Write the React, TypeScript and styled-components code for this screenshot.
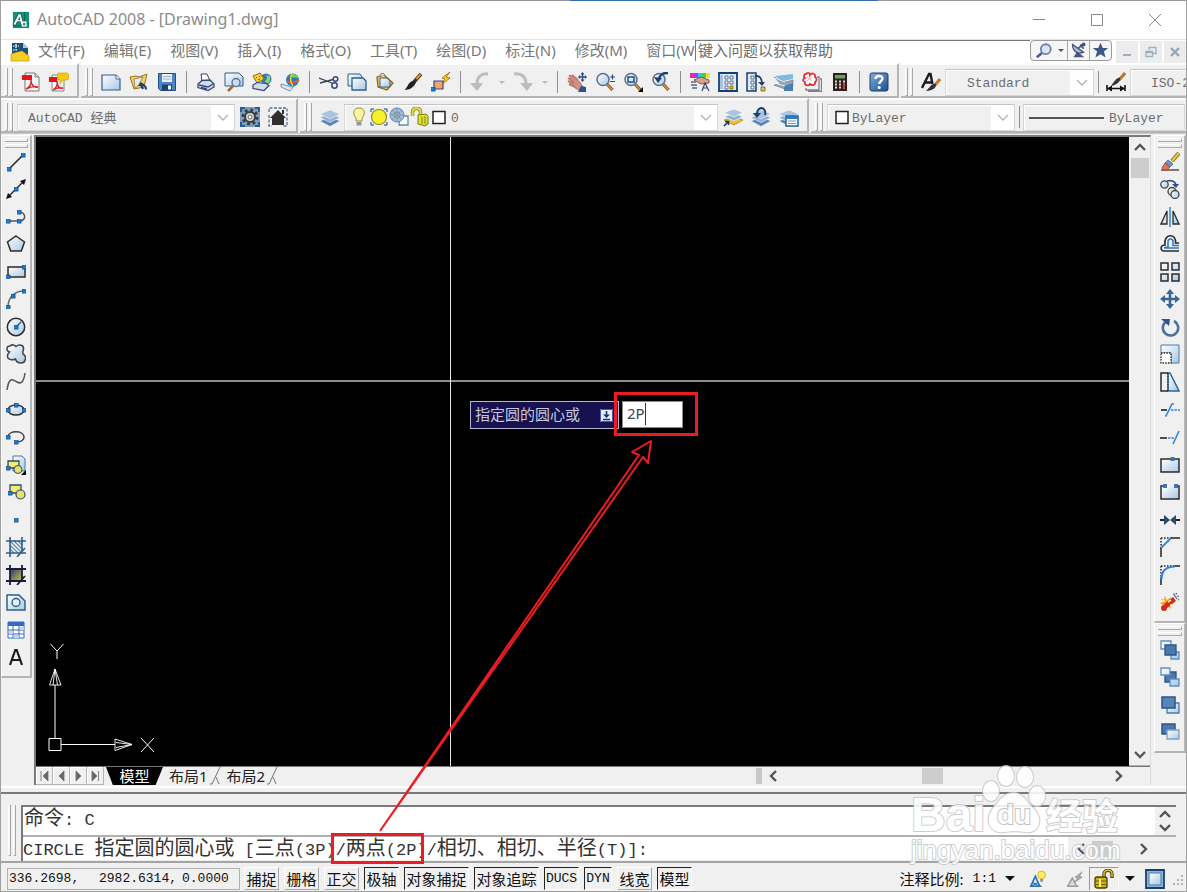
import React from "react";
import styled, { createGlobalStyle, css } from "styled-components";

const SANS = `"Noto Sans", "Noto Sans CJK SC", sans-serif`;
const MONO = `"Liberation Mono", "Noto Sans CJK SC", monospace`;

const GlobalStyle = createGlobalStyle`
  *, *::before, *::after { box-sizing: border-box; }
  body { margin: 0; background: #f0f0f0; }
  button, input, select { font: inherit; color: inherit; margin: 0; padding: 0; border: 0; background: none; border-radius: 0; }
`;

const Window = styled.div`
  position: relative;
  display: flex;
  flex-direction: column;
  min-height: 100vh;
  overflow: hidden;
  background: #f0f0f0;
  border-left: 1px solid #a0a0a0;
  border-right: 1px solid #a0a0a0;
  font-family: ${SANS};
`;

const TopEdge = styled.div`
  height: 1px;
  background: linear-gradient(to right, #9a9696 48%, #2f6fae 48%, #2f6fae 74%, #9a9a9a 74%);
`;

/* ---------- title bar ---------- */
const TitleBar = styled.header`
  display: flex;
  align-items: center;
  height: 38px;
  padding: 0 2px 0 11px;
  background: #fff;
  color: #8c8c8c;
`;
const Title = styled.h1`
  flex: 1;
  margin: 0 0 0 7px;
  font-size: 16px;
  font-weight: 400;
  line-height: 36px;
  white-space: nowrap;
  align-self: flex-start;
`;
const CaptionButton = styled.button`
  display: flex;
  align-items: center;
  justify-content: center;
  width: 58px;
  height: 38px;
`;

/* ---------- menu bar ---------- */
const MenuBar = styled.nav`
  display: flex;
  align-items: center;
  height: 24px;
  border-top: 1px solid #e2e2e2;
  background: #fff;
  padding-left: 9px;
`;
const Menus = styled.div`
  display: flex;
  align-items: center;
  align-self: flex-start;
  gap: 19px;
  width: 665px;
  padding-left: 8px;
  overflow: hidden;
`;
const MenuButton = styled.button`
  flex: none;
  color: #777;
  font-size: 15px;
  line-height: 20px;
  white-space: nowrap;
`;
const HelpInput = styled.input`
  flex: 1;
  min-width: 0;
  align-self: flex-start;
  height: 21px;
  border-top: 1px solid #777;
  border-left: 1px solid #777;
  padding: 0 0 3px 2px;
  color: #6d6d6d;
  font-size: 15px;
  &::placeholder { color: #6d6d6d; opacity: 1; }
`;
const InfoButtons = styled.div`
  display: flex;
  align-self: flex-start;
  height: 21px;
  border: 1px solid #9a9a9a;
  border-radius: 4px;
  overflow: hidden;
  background: #f6f6f6;
`;
const InfoButton = styled.button<{ $w: number }>`
  display: flex;
  align-items: center;
  justify-content: center;
  gap: 5px;
  width: ${(p) => p.$w}px;
  & + & { border-left: 1px solid #a8a8a8; }
`;
const ChildButtons = styled.div`
  display: flex;
  gap: 2px;
  margin-left: 4px;
`;
const ChildButton = styled.button`
  display: flex;
  align-items: center;
  justify-content: center;
  width: 22px;
  height: 22px;
  background: #ececec;
`;

/* ---------- toolbars ---------- */
const ToolRow = styled.div`
  display: flex;
  height: 35px;
  gap: 2px;
  overflow: hidden;
`;
const ToolGroup = styled.div<{ $grow?: boolean }>`
  display: flex;
  flex: ${(p) => (p.$grow ? "1 0 auto" : "none")};
  align-items: center;
  height: 35px;
  padding: 3px 4px 0 4px;
  border-top: 2px solid #fff;
  border-right: 2px solid #b4b4b4;
  border-bottom: 2px solid #b4b4b4;
  ${(p) => p.$grow && css`border-right: 0; padding-right: 0;`}
`;
const Grip = styled.div`
  flex: none;
  display: flex;
  gap: 2px;
  height: 28px;
  width: 8px;
  margin-right: 4px;
  &::before, &::after {
    content: "";
    width: 3px;
    border-left: 1px solid #fff;
    border-right: 1px solid #a8a8a8;
    border-bottom: 1px solid #a8a8a8;
  }
`;
const ToolButton = styled.button`
  flex: none;
  display: flex;
  align-items: center;
  justify-content: center;
  width: 28px;
  height: 28px;
`;
const DropButton = styled.button`
  flex: none;
  display: flex;
  align-items: center;
  justify-content: center;
  width: 15px;
  height: 28px;
`;
const Separator = styled.span<{ $tight?: boolean }>`
  flex: none;
  width: 1px;
  height: 22px;
  margin: 0 ${(p) => (p.$tight ? 3 : 5)}px;
  background: #8e8e8e;
`;
const Combo = styled.div<{ $w: number; $grow?: boolean }>`
  position: relative;
  flex: ${(p) => (p.$grow ? `1 0 ${p.$w}px` : "none")};
  width: ${(p) => p.$w}px;
  height: 27px;
  margin-right: 1px;
  border: 1px solid #d6d6d6;
  border-top-color: #c4c4c4;
  box-shadow: inset 1px 1px #fff;
  overflow: hidden;
`;
const ComboSelect = styled.select<{ $indent: number }>`
  appearance: none;
  width: 100%;
  height: 25px;
  padding-left: ${(p) => p.$indent}px;
  color: #6d6d6d;
  font-family: ${MONO};
  font-size: 13px;
`;
const ComboArrow = styled.span`
  position: absolute;
  top: 0;
  right: 0;
  bottom: 0;
  display: flex;
  align-items: center;
  justify-content: center;
  width: 23px;
  background: #fff;
  pointer-events: none;
`;
const ComboArt = styled.span`
  position: absolute;
  top: 2px;
  left: 4px;
  display: flex;
  pointer-events: none;
`;

/* ---------- work area ---------- */
const Main = styled.main`
  display: flex;
  flex: 1;
  align-items: stretch;
  padding-top: 1px;
  border-top: 1px solid #c8c8c8;
`;
const SideColumn = styled.aside<{ $w: number; $gap?: number }>`
  flex: none;
  width: ${(p) => p.$w}px;
  margin-right: ${(p) => p.$gap ?? 0}px;
`;
const Palette = styled.div`
  padding-bottom: 5px;
  border-top: 1px solid #fff;
  border-left: 1px solid #fff;
  border-right: 2px solid #b4b4b4;
  border-bottom: 2px solid #b4b4b4;
`;
const PaletteGrip = styled.div`
  display: flex;
  flex-direction: column;
  gap: 2px;
  height: 12px;
  padding: 2px 2px 0 3px;
  &::before, &::after {
    content: "";
    height: 4px;
    border-top: 1px solid #fff;
    border-bottom: 1px solid #a8a8a8;
    border-right: 1px solid #a8a8a8;
  }
`;
const PaletteButtons = styled.div<{ $h: number }>`
  display: flex;
  flex-direction: column;
  height: ${(p) => p.$h}px;
`;
const PaletteButton = styled.button`
  display: flex;
  flex: 1;
  align-items: center;
  justify-content: center;
`;
const Document = styled.section`
  display: flex;
  flex: 1;
  flex-direction: column;
  min-width: 0;
  margin-right: 3px;
  border-top: 2px solid #7a7a7a;
  border-left: 2px solid #7a7a7a;
  border-right: 1px solid #dcdcdc;
`;
const ViewRow = styled.div`
  display: flex;
  flex: 1;
`;
const Canvas = styled.div`
  position: relative;
  flex: 1;
  overflow: hidden;
  background: #000;
`;
const CrossV = styled.div`
  position: absolute;
  top: 0;
  bottom: 0;
  left: 414px;
  width: 1px;
  background: #e8e8e8;
`;
const CrossH = styled.div`
  position: absolute;
  top: 243px;
  left: 0;
  right: 0;
  height: 2px;
  background: #8e8e8e;
`;
const Ucs = styled.svg`
  position: absolute;
  left: 10px;
  bottom: 8px;
`;
const DynamicPrompt = styled.label`
  position: absolute;
  top: 264px;
  left: 434px;
  display: flex;
  align-items: center;
  justify-content: space-between;
  width: 149px;
  height: 28px;
  padding: 0 5px 0 4px;
  border: 1px solid #b4b4d4;
  background: #17124f;
  color: #c6c6de;
  font-size: 15px;
  line-height: 24px;
  white-space: nowrap;
`;
const PromptWords = styled.span`
  align-self: flex-start;
`;
const DynamicField = styled.div`
  position: absolute;
  top: 264px;
  left: 586px;
  width: 61px;
  height: 27px;
  border: 1px solid #8a8a8a;
  background: #fff;
`;
const DynamicInput = styled.input`
  width: 100%;
  height: 25px;
  padding: 0 0 3px 4px;
  color: #444;
  font-size: 15px;
`;
const Caret = styled.span`
  position: absolute;
  top: 1px;
  left: 22px;
  width: 1px;
  height: 22px;
  background: #333;
`;
const VScroll = styled.div`
  display: flex;
  flex-direction: column;
  align-items: center;
  width: 21px;
  padding: 5px 0;
  border-bottom: 1px solid #b0b0b0;
`;
const ScrollButton = styled.button`
  flex: none;
  display: flex;
  align-items: center;
  justify-content: center;
  width: 20px;
  height: 12px;
`;
const VThumb = styled.div`
  width: 18px;
  height: 20px;
  margin: 4px 0 auto;
  background: #cdcdcd;
`;
const TabBar = styled.div`
  display: flex;
  height: 19px;
  border-top: 1px solid #777;
`;
const NavButton = styled.button`
  display: flex;
  align-items: center;
  justify-content: center;
  width: 17px;
  border-right: 1px solid #b4b4b4;
  border-bottom: 1px solid #b4b4b4;
  box-shadow: inset 1px 1px #fff;
`;
const ModelTab = styled.button`
  width: 57px;
  margin-left: 2px;
  background: #000;
  clip-path: polygon(0 0, 100% 0, 87% 100%, 12% 100%);
  color: #fff;
  font-size: 15px;
  line-height: 16px;
`;
const LayoutTab = styled.button`
  padding: 0 2px 0 6px;
  color: #222;
  font-size: 15px;
  line-height: 16px;
`;
const HScroll = styled.div`
  display: flex;
  flex: 1;
  align-items: center;
  padding-right: 22px;
`;
const Splitter = styled.div`
  width: 6px;
  height: 16px;
  margin: 0 2px 0 auto;
  background: #c8c8c8;
`;
const HTrack = styled.div<{ $w: number; $at?: number }>`
  width: ${(p) => p.$w}px;
  padding-left: ${(p) => p.$at ?? 0}px;
`;
const HThumb = styled.div`
  width: 21px;
  height: 16px;
  background: #cdcdcd;
`;
const Divider = styled.div`
  height: 8px;
  margin-top: 1px;
  border-top: 2px solid #fff;
  border-bottom: 2px solid #7a7a7a;
`;

/* ---------- command window ---------- */
const CommandPanel = styled.section`
  display: flex;
  height: 69px;
  padding: 11px 10px 0 7px;
  border-bottom: 2px solid #a4a4a4;
`;
const CommandGrip = styled(Grip)`
  height: 51px;
  width: 9px;
`;
const CommandBody = styled.div`
  flex: 1;
  min-width: 0;
  border-top: 2px solid #7a7a7a;
  border-left: 2px solid #7a7a7a;
`;
const HistoryRow = styled.div`
  display: flex;
  height: 30px;
  border-bottom: 2px solid #b0b0b0;
  background: #fff;
`;
const CommandText = styled.div`
  flex: 1;
  padding-left: 1px;
  color: #333;
  font-family: ${MONO};
  font-size: 17px;
  line-height: 26px;
  white-space: pre;
`;
const Han = styled.span`
  font-size: 20px;
`;
const HistoryScroll = styled.div`
  display: flex;
  flex-direction: column;
  justify-content: center;
  width: 21px;
  background: #f0f0f0;
`;
const PromptRow = styled.div`
  display: flex;
  height: 23px;
  background: #fff;
`;
const PromptLabel = styled.label`
  color: #333;
  font-family: ${MONO};
  font-size: 17px;
  line-height: 26px;
  white-space: pre;
`;
const PromptInput = styled.input`
  flex: 1;
  min-width: 0;
  outline: none;
`;
const PromptScroll = styled.div`
  display: flex;
  align-items: center;
  width: 108px;
  padding-left: 4px;
  background: #f0f0f0;
`;

/* ---------- status bar ---------- */
const StatusBar = styled.footer`
  display: flex;
  align-items: center;
  height: 29px;
  padding: 3px 0 0 6px;
  border-bottom: 1px solid #a0a0a0;
  font-size: 15px;
  color: #111;
`;
const Coordinates = styled.div`
  display: flex;
  align-items: center;
  width: 233px;
  height: 22px;
  padding-left: 1px;
  margin-right: 4px;
  border: 1px solid #b0b0b0;
  font-family: ${MONO};
  font-size: 13px;
`;
const Coordinate = styled.span<{ $w: number }>`
  width: ${(p) => p.$w}px;
`;
const Toggles = styled.div`
  display: flex;
  gap: 5px;
`;
const Toggle = styled.button<{ $w: number; $on?: boolean; $mono?: boolean }>`
  width: ${(p) => p.$w}px;
  height: 23px;
  border: 1px solid;
  border-color: ${(p) => (p.$on ? "#222 #fff #fff #222" : "#fff #a8a8a8 #a8a8a8 #fff")};
  line-height: ${(p) => (p.$mono ? 22 : 20)}px;
  white-space: nowrap;
  ${(p) => p.$mono && css`font-family: ${MONO}; font-size: 13px;`}
`;
const Scale = styled.button`
  display: flex;
  align-items: center;
  gap: 9px;
  margin-left: auto;
  line-height: 20px;
  white-space: nowrap;
`;
const ScaleValue = styled.span`
  font-family: ${MONO};
  font-size: 13px;
`;
const TrayButton = styled.button<{ $w: number; $sunken?: boolean }>`
  display: flex;
  align-items: center;
  justify-content: center;
  width: ${(p) => p.$w}px;
  height: 24px;
  ${(p) => p.$sunken && css`border: 1px solid; border-color: #999 #fff #fff #999;`}
`;

/* ---------- overlays ---------- */
const Annotation = styled.svg`
  position: absolute;
  top: 0;
  left: -1px;
  pointer-events: none;
`;
const Watermark = styled.svg`
  position: absolute;
  right: 63px;
  bottom: 20px;
  pointer-events: none;
`;
const HiddenDefs = styled.svg`
  position: absolute;
`;

/* ---------- drawings, all on a 20 x 20 grid ---------- */
const K = "#2b2b2b";
const node = (x: number, y: number) => (
  <rect x={x - 1.5} y={y - 1.5} width="3.6" height="3.6" fill="#1580d8" stroke="#0b3f86" strokeWidth=".6" />
);
const sheets = (
  <>
    <path d="M0 14l10-4 10 4-10 5.500z" fill="#5c84b0" stroke="#f0f4f8" strokeWidth=".6" />
    <path d="M0 10.500l10-4 10 4-10 5z" fill="#8fb0d2" stroke="#f0f4f8" strokeWidth=".6" />
    <path d="M0 7l10-4 10 4-10 5z" fill="#a9c4e0" stroke="#f0f4f8" strokeWidth=".6" />
  </>
);
const lens = (
  <>
    <path d="M12 12l5.500 6" stroke="#7a4a1c" strokeWidth="3" />
    <path d="M12 12l5.500 6" stroke="#e0973c" strokeWidth="1.300" />
    <circle cx="8" cy="7.500" r="6" fill="url(#paper)" stroke="#5b7089" strokeWidth="1.500" />
  </>
);
const printer = (
  <>
    <path d="M6 9L5 2h6l3 7z" fill="#fff" stroke="#35477c" />
    <path d="M2 12l4-3.500 8-.5 4 4v3l-6 3.500-10-3z" fill="#d3dcea" stroke="#35477c" strokeWidth="1.300" />
    <path d="M3 13l9 2 5-3M5 15.500l6 1.500" stroke="#35477c" fill="none" strokeWidth="1.300" />
  </>
);
const brush = (
  <>
    <path d="M18 2l-7 8" stroke="#5a3510" strokeWidth="3.500" />
    <path d="M17.500 2.500l-4 4.500" stroke="#dc8c3e" strokeWidth="2" />
    <path d="M12.500 9.500c1 2-2 5-4 6.500-2 1.500-5 1.500-7 2 3-3 3-5 5-7 2-2 5-3 6-1.500z" fill="#222" />
  </>
);

const art: Record<string, React.ReactNode> = {
  app: (
    <>
      <path d="M1 1h18v18H1z" fill="#138f7c" />
      <path d="M1 15l6-12h3l3 12h-3l-1-3H6l-2 4z" fill="#e9f5f2" stroke="#063f3a" strokeWidth=".8" />
      <path d="M7 10l1-4 1 4z" fill="#0a4b46" />
      <path d="M14 1v10M1 16.500h10M17 14h2" stroke="#0a4b46" strokeWidth=".8" />
      <path d="M11.500 12.500h4v4h-4z" fill="#138f7c" stroke="#fff" strokeWidth="1.500" />
    </>
  ),
  dwg: (
    <>
      <path d="M2 1h11l5 5v12H2z" fill="#1d5079" />
      <path d="M13 1l5 5h-5z" fill="#a9c7dd" />
      <path d="M1 12l11-3 7 5v5H1z" fill="#f7cf26" stroke="#c79700" strokeWidth=".7" />
      <path d="M3 4h6M6 2v6M3 8h4" stroke="#fff" strokeWidth="1.200" strokeDasharray="1.500 1" />
    </>
  ),
  pdf: (
    <>
      <path d="M4 1h10l4 4v14H4z" fill="#f4f4f4" stroke="#777" />
      <path d="M14 1v4h4" fill="#ccc" stroke="#777" strokeWidth=".8" />
      <path d="M1 3h10v5H1z" fill="#e2141c" />
      <path d="M5 17c4-2 6-6 5-9 0 5 3 8 7 7-4-1-8 0-12 2z" fill="none" stroke="#d8232a" strokeWidth="1.400" />
    </>
  ),
  pdfNote: (
    <>
      <path d="M3 3h10l2 4v12H3z" fill="#f4f4f4" stroke="#888" />
      <path d="M0 5h8v5H0z" fill="#e2141c" />
      <path d="M4 18c3-2 5-5 4-9 0 5 2 8 6 7-4-1-7 0-10 2z" fill="none" stroke="#d8232a" strokeWidth="1.500" />
      <path d="M10 1h8q1.500 0 1.500 1.500v4Q19.500 8 18 8h-4l-3 4V8h-1Q8.500 8 8.500 6.500v-4Q8.500 1 10 1z" fill="#fcc80e" stroke="#d39a00" strokeWidth=".6" />
    </>
  ),
  new: (
    <>
      <path d="M1 3h14l4 4v11H1z" fill="url(#paper)" stroke="#2c5f92" strokeWidth="1.200" />
      <path d="M15 3v4h4" fill="#fff" stroke="#2c5f92" strokeWidth=".9" />
    </>
  ),
  open: (
    <>
      <path d="M1 5l6-1 3 1 8-3-3 13-10 2z" fill="#f0cf6d" stroke="#9a7416" />
      <path d="M5 7l9-2-5 9-3 2z" fill="#e2ecf6" stroke="#8a6d25" strokeWidth=".7" />
      <path d="M12 13l2 4M11 11.500c2 0 6 2 6 6" stroke="#1b3e74" strokeWidth="2" fill="none" />
      <path d="M9 14l3-4 2 4z" fill="#1b3e74" />
    </>
  ),
  save: (
    <>
      <path d="M1.500 1.500h17v17h-15l-2-2z" fill="#4f86c2" stroke="#204f87" />
      <path d="M5 2h10v8H5z" fill="#e8eef5" />
      <path d="M6 4.500h8M6 7h8" stroke="#9db4cc" />
      <path d="M5 12.500h10v6H5z" fill="#1d4170" />
      <path d="M11 13.500h3v4h-3z" fill="#fff" />
    </>
  ),
  print: printer,
  preview: (
    <>
      <path d="M1 1h14l4 4v9H1z" fill="url(#paper)" stroke="#2c5f92" />
      <path d="M9 14l-5 5" stroke="#a06a2c" strokeWidth="2.500" />
      <circle cx="12" cy="10.500" r="4" fill="#c9dff0" stroke="#5b7089" strokeWidth="1.300" />
    </>
  ),
  publish: (
    <>
      <circle cx="14" cy="7" r="5.500" fill="#3679b8" />
      <path d="M12 3c3 0 4 3 2 5s0 3 2 3 3-5 2-7z" fill="#8fd36c" />
      <path d="M1 4l7-3 4 6-7 4z" fill="#f7cf35" stroke="#936e00" />
      <path d="M4 5l1 1M7 4l1 1M6 8l2-1" stroke="#7a5c00" />
      <path d="M1 13l4-2.500 9 1 3 2-5 5-11-2z" fill="#d3dcea" stroke="#35477c" strokeWidth="1.200" />
    </>
  ),
  globe: (
    <>
      <circle cx="12.500" cy="8" r="6.500" fill="#277ebb" />
      <path d="M11 2c4 0 7 2 7 4-2-1-7 0-8-1z" fill="#7ccf4e" />
      <path d="M7 9c3 2 8 2 12-1" stroke="#ee5a2a" strokeWidth="2" fill="none" />
      <path d="M12 2c-2 3-2 8 1 12" stroke="#f4c22d" strokeWidth="1.600" fill="none" />
      <path d="M1 12l10 3 3-1-4 5-9-4z" fill="#dbe7f3" stroke="#5b7ea6" strokeWidth=".8" />
    </>
  ),
  cut: (
    <>
      <path d="M0 6l13 5M1 11l13-3.500" stroke="#38414d" strokeWidth="1.300" />
      <circle cx="16.500" cy="7" r="2.300" fill="none" stroke="#344581" strokeWidth="1.500" />
      <circle cx="15.500" cy="13.500" r="2.700" fill="none" stroke="#344581" strokeWidth="1.500" />
    </>
  ),
  copy: (
    <>
      <path d="M1 2h12l2 3v9H1z" fill="url(#paper)" stroke="#2c5f92" />
      <path d="M5 6h11l3 3v9H5z" fill="url(#paper)" stroke="#2c5f92" strokeWidth="1.300" />
    </>
  ),
  paste: (
    <>
      <path d="M2 5l7-2 9 8-6 7-9-3z" fill="#e9c566" stroke="#8b6a1d" strokeWidth="1.300" />
      <path d="M5 4c0-4 5-3 5 0" fill="#ccc" stroke="#777" />
      <path d="M5 6h7l3 3v6H5z" fill="url(#paper)" stroke="#2c5f92" />
    </>
  ),
  brush,
  block: (
    <>
      <path d="M19 0l-8 6 3 1-4 6 9-7-4-1z" fill="#ffd21e" stroke="#8f6a00" strokeWidth=".8" />
      <path d="M3 9h9v8H3z" fill="#f6a268" stroke="#2d4f8b" strokeWidth="1.200" />
      {node(2, 17)}
    </>
  ),
  undo: (
    <>
      <path d="M18 2C11 1 7 5 7 12" fill="none" stroke="#bcbcbc" strokeWidth="3" />
      <path d="M0 11h13l-6 8z" fill="#bcbcbc" />
    </>
  ),
  redo: (
    <>
      <path d="M1 2c8-1 12 3 12 10" fill="none" stroke="#bcbcbc" strokeWidth="3" />
      <path d="M7 11h13l-6 8z" fill="#bcbcbc" />
    </>
  ),
  pan: (
    <>
      <path d="M2 3l3 1 8 6 3 5-4 3-4-2z" fill="#d58f85" stroke="#9d5a52" strokeWidth=".7" />
      <path d="M1 6l6 4M1 9l6 3M2 12l6 3M5 3l6 5" stroke="#c27a70" strokeWidth="2" />
      <path d="M14 14l5 1v5h-8z" fill="#2c5384" />
      <path d="M15.500 1v8M12 5h7" stroke="#234c80" strokeWidth="1.300" />
      <path d="M15.500 0l2 2.500h-4zM15.500 10l2-2.500h-4zM11 5l2-2v4zM20 5l-2-2v4z" fill="#234c80" />
    </>
  ),
  zoom: (
    <>
      {lens}
      <path d="M15 5h5M17.500 2.500v5M15 9.500h5" stroke="#234c80" strokeWidth="1.200" />
    </>
  ),
  zoomWin: (
    <>
      {lens}
      <path d="M5 5h6v5H5z" fill="#dbe9f6" stroke="#1f4f8c" strokeWidth="1.500" />
      <path d="M20 15v5h-5z" fill="#000" />
    </>
  ),
  zoomPrev: (
    <>
      {lens}
      <path d="M17 1c-5 0-7 1-9 5" fill="none" stroke="#1f3f70" strokeWidth="2.500" />
      <path d="M3 5l8 1-4 5z" fill="#1f3f70" />
    </>
  ),
  props: (
    <>
      <path d="M0 1h4v5H0z" fill="#f02a8a" /><path d="M4 1h4v5H4z" fill="#a13df0" />
      <path d="M8 1h4v5H8z" fill="#2cc4f0" /><path d="M12 1h4v5h-4z" fill="#3cd645" />
      <path d="M16 1h4v5h-4z" fill="#f5df25" />
      <path d="M4 8l7-3 8 3v3l-8 1z" fill="#dba18e" stroke="#6c3f32" strokeWidth=".8" />
      <path d="M1 10h5M1 13h6M2 16h5" stroke="#55698b" strokeWidth="1.500" />
      <path d="M12 19l3-8 4 8M13 16h5" fill="none" stroke="#39476a" strokeWidth="1.200" />
    </>
  ),
  center: (
    <>
      <path d="M1 1h18v18H1z" fill="#dceaf7" stroke="#163f74" strokeWidth="1.800" />
      <path d="M2 3h3v14H2z" fill="#a8c3df" />
      <path d="M7 4h3v3H7zM12 4h3v3h-3zM7 9h3v3H7zM12 9h3v3h-3zM7 14h3v3H7z" fill="#fff" stroke="#3a5273" strokeWidth=".8" />
      <path d="M12 14h3v3h-3z" fill="#f4c22d" stroke="#7a5c00" strokeWidth=".8" />
    </>
  ),
  palettes: (
    <>
      <path d="M1 1h9v18H1z" fill="#dceaf7" stroke="#163f74" strokeWidth="1.500" />
      <path d="M5 4h3v3H5zM5 9h3v3H5zM5 14h3v3H5z" fill="#fff" stroke="#3a5273" strokeWidth=".8" />
      <path d="M9 4c5-1 7 3 7 8" fill="none" stroke="#1f3f70" strokeWidth="1.800" />
      <path d="M12 10h7l-3 4z" fill="#1f3f70" />
      <path d="M15 15h4v4h-4z" fill="#f4c22d" stroke="#555" strokeWidth=".8" />
    </>
  ),
  sheetset: (
    <>
      <path d="M1 4l18-2v5L9 9z" fill="#7dbbe0" />
      <path d="M0 5l12 5 7-2v6l-8 3L0 13l7-1z" fill="#98a7b3" stroke="#5d6c78" strokeWidth=".6" />
      <path d="M10 14l9-3v8h-9z" fill="#4b7fb0" />
      <path d="M1 6l10 4M3 12l8 2" stroke="#e5ebf0" strokeWidth="1.200" />
    </>
  ),
  markup: (
    <>
      <path d="M15 5h2v13H4v-2M18 7h1.500v12.500H6" fill="none" stroke="#7d8093" strokeWidth="1.300" />
      <path d="M1 2h14v14H1z" fill="#f1f1f6" />
      <path d="M4 2c2-2 4-1 4 1 2-3 6-1 5 2 2 1 2 4 0 5 1 3-3 4-5 2-1 2-6 2-5-2-3-1-2-3 0-4-2-1-1-4 1-4z" fill="#fff" stroke="#e72f36" strokeWidth="1.800" />
      <path d="M5 5l5 4M10 5L5 9" stroke="#f2a5a8" />
    </>
  ),
  calc: (
    <>
      <path d="M3 1h14v18H3z" fill="#2d1f1d" />
      <path d="M5 3h10v3.500H5z" fill="#6ea46c" />
      <path d="M5 9.500h10M5 12.500h10M5 15.500h10" stroke="#e8d4d0" strokeWidth="2" strokeDasharray="2 2" />
      <path d="M13 11.500h2v5h-2z" fill="#d33" />
    </>
  ),
  help: (
    <>
      <rect x="1" y="1" width="18" height="18" rx="2" fill="url(#blue)" stroke="#16406f" />
      <path d="M6.500 7c0-4 7-4 7-.5 0 2.500-3.300 2.500-3.300 5.500" fill="none" stroke="#fff" strokeWidth="2.400" />
      <circle cx="10.200" cy="15.500" r="1.500" fill="#fff" />
    </>
  ),
  textStyle: (
    <>
      <path d="M1 16L8 2h1.500l2 10M4 10.500h7" fill="none" stroke="#1c1c1c" strokeWidth="2.400" />
      <path d="M19 7l-5 6" stroke="#c47b32" strokeWidth="3" />
      <path d="M15 12c1 3-3 7-10 7 4-3 5-8 10-7z" fill="#333" />
    </>
  ),
  dimStyle: (
    <>
      <path d="M1 13v6M19 13v6M2 16.500h16" stroke="#111" strokeWidth="1.600" />
      <path d="M1 16.500l5-3v6zM19 16.500l-5-3v6z" fill="#111" />
      <path d="M19 1l-6 7" stroke="#b9752f" strokeWidth="3" />
      <path d="M14 6c1 3-3 7-9 8 3-4 6-9 9-8z" fill="#333" />
    </>
  ),
  gear: (
    <>
      <path d="M0 0h20v20H0z" fill="#7c9dbf" />
      <path d="M0 0h5v2H2v3H0zM15 0h5v5h-2V2h-3zM0 15h2v3h3v2H0zM18 15h2v5h-5v-2h3z" fill="#2f5a8b" />
      <circle cx="10" cy="10" r="7" fill="none" stroke="#3c3c3c" strokeWidth="3" strokeDasharray="2.750 2.750" />
      <circle cx="10" cy="10" r="5" fill="#d9d9d9" stroke="#3c3c3c" strokeWidth="2" />
      <circle cx="10" cy="10" r="2" fill="#fff" stroke="#666" />
    </>
  ),
  home: (
    <>
      <path d="M1 5V1h18v18h-4M1 8v11h3" fill="none" stroke="#5a6f8a" strokeWidth="1.300" strokeDasharray="3 1.500" />
      <path d="M2 11l8-8 8 8h-2v7H4v-7z" fill="#2e2e2e" />
      <path d="M14 3h2v4h-2z" fill="#2e2e2e" />
    </>
  ),
  layers: sheets,
  layerState: (
    <>
      <path d="M1 13l10-3 9 3-9 5z" fill="#e9c32b" stroke="#8d7300" strokeWidth=".6" />
      <path d="M1 9.500l10-3 9 3-9 4.500z" fill="#8fb0d2" stroke="#fff" strokeWidth=".6" />
      <path d="M1 5.500L11 2l9 3.500-9 4.500z" fill="#a9c4e0" stroke="#fff" strokeWidth=".6" />
      <path d="M1 19l4-4M2 14.500h3.500V18" stroke="#18335c" strokeWidth="1.500" fill="none" />
    </>
  ),
  layerPrev: (
    <>
      {sheets}
      <path d="M14 8c1-4-1-7-4-7-3 1-4 4-4 6" fill="none" stroke="#1f3f70" strokeWidth="2" />
      <path d="M2 6h8l-4 5z" fill="#1f3f70" />
    </>
  ),
  layerWin: (
    <>
      {sheets}
      <path d="M7 9h12v10H7z" fill="#fff" stroke="#1f5f9e" strokeWidth="1.500" />
      <path d="M7 9h12v3H7z" fill="#2f79bd" />
      <path d="M9 14h8M9 16.500h8" stroke="#6b93bb" />
    </>
  ),
  bulb: (
    <>
      <path d="M10 1c7 0 6 7 3 10v3H7v-3C4 8 3 1 10 1z" fill="#fdf3a4" stroke="#9a8d35" />
      <path d="M7.500 15h5v3.500h-5z" fill="#8d95a4" />
    </>
  ),
  sun: (
    <>
      <path d="M2 2h3M2 2v3M18 2v3M18 2h-3M2 18v-3M2 18h3M18 18h-3M18 18v-3" stroke="#497bb0" strokeWidth="1.500" />
      <circle cx="10" cy="10" r="7.500" fill="#f9ee2c" stroke="#8d8a2a" strokeWidth="1.200" />
    </>
  ),
  freeze: (
    <>
      <path d="M11 9h8v9h-9z" fill="#fff" stroke="#6888a8" strokeWidth="1.300" />
      <circle cx="8" cy="8" r="7" fill="#9fbdd8" stroke="#6489b0" />
      <circle cx="8" cy="8" r="3" fill="#c9c98a" stroke="#5e7f9f" strokeDasharray="2 1" />
      <path d="M8 1v14M1 8h14M3 3l10 10M13 3L3 13" stroke="#6a90b8" strokeWidth=".7" />
    </>
  ),
  unlock: (
    <>
      <path d="M3.500 9V5c0-5 8-5 8 0v5" fill="none" stroke="#7d8014" strokeWidth="3.500" />
      <path d="M3.500 9V5c0-5 8-5 8 0v5" fill="none" stroke="#e2e43c" strokeWidth="2" />
      <path d="M9 8l8-1 2 2v8l-3 2-7-2z" fill="#dfe032" stroke="#7d8014" />
      <path d="M13 10v7M16 9v8" stroke="#a4a61c" strokeWidth="1.500" />
    </>
  ),
  swatch: <path d="M4 4.500h12v12H4z" fill="#fff" stroke="#222" strokeWidth="1.500" />,

  line: <><path d="M3 17L17 3" stroke={K} strokeWidth="1.600" />{node(3, 17)}{node(17, 3)}</>,
  xline: (
    <>
      <path d="M3 17L17 3" stroke={K} strokeWidth="1.400" />
      <path d="M20 0l-2 6-4-4zM0 20l2-6 4 4z" fill="#111" />
      {node(10, 10)}
    </>
  ),
  pline: (
    <>
      <path d="M2 14h11c8 0 7-9 0-9" fill="none" stroke="#555" strokeWidth="1.500" />
      {node(2, 14)}{node(13, 14)}{node(13, 5)}
    </>
  ),
  polygon: <path d="M10 2l8.500 6-3.200 9H4.700L1.500 8z" fill="url(#paper)" stroke={K} strokeWidth="1.500" />,
  rect: <><path d="M2 5h17v10H2z" fill="url(#paper)" stroke={K} strokeWidth="1.500" />{node(2, 14.500)}{node(18, 5)}</>,
  arc: <><path d="M2 18C2 9 8 2 18 2" fill="none" stroke="#666" strokeWidth="1.500" />{node(2, 18)}{node(7, 7)}{node(18, 2)}</>,
  circle: (
    <>
      <circle cx="10" cy="10" r="8.700" fill="url(#paper)" stroke={K} strokeWidth="1.500" />
      <path d="M10 10l5-5" stroke="#1e5ea0" strokeWidth="1.500" />
      {node(10, 10)}
    </>
  ),
  cloud: (
    <path d="M3.500 8C0 7 0 2 4 2c2-2 5-1 6 .5C13 0 18 1 17.500 5c-.5 2-1 3-.5 5 4 2 3 9-2 9-4 0-5-2-5.500-4C6 17 1 15 1.500 12c0-2 1-3 2-4z" fill="url(#paper)" stroke="#444" strokeWidth="1.500" />
  ),
  spline: <path d="M1 18C3 5 6 7 11 10s7-2 8-9" fill="none" stroke="#555" strokeWidth="1.500" />,
  ellipse: (
    <>
      <ellipse cx="10" cy="10" rx="8" ry="5" fill="url(#paper)" stroke={K} strokeWidth="1.500" />
      {node(2, 10)}{node(18, 10)}{node(10, 5)}
    </>
  ),
  ellipseArc: (
    <>
      <path d="M2 10C2 3 18 3 18 10c0 4-5 5-8 5" fill="none" stroke="#444" strokeWidth="1.500" />
      {node(2, 10)}{node(10, 15)}
    </>
  ),
  insert: (
    <>
      <path d="M7 1h9l3 3v12H7z" fill="url(#paper)" stroke="#4679aa" />
      <path d="M2 6h11v7H2z" fill="#f4ec6a" stroke="#2b4d76" strokeWidth="1.300" />
      <circle cx="12" cy="14.500" r="4" fill="#e9e162" stroke="#2b4d76" />
      {node(2, 13)}
      <path d="M20 15v5h-5z" fill="#000" />
    </>
  ),
  block2: (
    <>
      <path d="M4 3h11v8H4z" fill="#f4ec6a" stroke="#2b4d76" strokeWidth="1.300" />
      <circle cx="14.500" cy="12.500" r="4.500" fill="#e9e162" stroke="#2b4d76" strokeWidth="1.200" />
      {node(4, 11)}
    </>
  ),
  point: node(10, 10),
  hatch: (
    <>
      <path d="M4 4h12v12H4z" fill="#fff" />
      <path d="M4 8l8 8M4 4l12 12M8 4l8 8M12 4l4 4M4 12l4 4" stroke="#5582b0" strokeWidth="1.200" />
      <path d="M4 0v20M16 0v15M0 4h20M0 16h20M11 20l8-9" stroke="#2c5c8c" strokeWidth="1.600" />
    </>
  ),
  gradient: (
    <>
      <path d="M4 4h12v12H4z" fill="url(#olive)" />
      <path d="M4 0v20M16 0v15M0 4h20M0 16h20M11 20l8-9" stroke="#171d3c" strokeWidth="1.800" />
    </>
  ),
  region: (
    <>
      <path d="M1 3h12l6 6v9H1z" fill="url(#paper)" stroke="#2c5f92" strokeWidth="1.500" />
      <circle cx="10" cy="10.500" r="4" fill="#e5eef7" stroke="#2c5f92" strokeWidth="1.400" />
    </>
  ),
  table: (
    <>
      <path d="M2 2h16v16H2z" fill="#fff" stroke="#3b6db4" />
      <path d="M2 2h16v4H2z" fill="#3668c8" />
      <path d="M2 10h16M2 14h16M7 6v12M13 6v12" stroke="#3b6db4" />
      <path d="M3 11h4v3H3zM8 15h5v3H8zM14 7h4v3h-4z" fill="#bdd3ef" />
    </>
  ),
  mtext: <path d="M4 18L9.300 3h1.400L16 18M5.500 13h9" fill="none" stroke="#1c1c1c" strokeWidth="2.200" />,

  erase: (
    <>
      <path d="M1 18h18" stroke="#444" strokeWidth="1.400" />
      <path d="M19 1l-7 8" stroke="#8a6a10" strokeWidth="4" />
      <path d="M19 1l-7 8" stroke="#e8c94a" strokeWidth="2.300" />
      <path d="M8 8l5 4-3 3-5-4z" fill="#6c95c2" stroke="#36597f" strokeWidth=".7" />
      <path d="M5 11l5 4-3 3H3l-1-2z" fill="#e3705a" stroke="#8d3c2d" strokeWidth=".7" />
    </>
  ),
  copyObj: (
    <>
      <circle cx="4.500" cy="5.500" r="3.700" fill="url(#paper)" stroke="#444" strokeWidth="1.300" />
      <circle cx="12" cy="12.500" r="4" fill="url(#paper)" stroke="#444" strokeWidth="1.300" />
      <circle cx="15" cy="15.500" r="4" fill="url(#paper)" stroke="#444" strokeWidth="1.300" />
      <path d="M7 2c4-1 8 0 9 4" fill="none" stroke="#2a5287" strokeWidth="1.800" />
      <path d="M12 5h7l-3 4z" fill="#2a5287" />
    </>
  ),
  mirror: (
    <>
      <path d="M7 4v13H1zM13 4v13h6z" fill="url(#paper)" stroke={K} strokeWidth="1.300" />
      <path d="M10 0v20" stroke="#2e86e0" strokeWidth="1.500" />
    </>
  ),
  offset: (
    <>
      <path d="M19 17H4c-4 0-4-6 1-6C3 -1 17 -1 15.500 9H19" fill="none" stroke={K} strokeWidth="1.600" />
      <path d="M19 14H5.500c-1.500 0-1.500-1 2.500-1V8c0-4 5-4 5 0v3.500h6" fill="none" stroke="#2e78c4" strokeWidth="1.500" />
    </>
  ),
  array: <path d="M1 1h7v7H1zM12 1h7v7h-7zM1 12h7v7H1zM12 12h7v7h-7z" fill="url(#paper)" stroke={K} strokeWidth="1.500" />,
  move: (
    <>
      <path d="M10 3v14M3 10h14" stroke="#39659a" strokeWidth="2.600" />
      <path d="M10 0l4 5H6zM10 20l4-5H6zM0 10l5-4v8zM20 10l-5-4v8z" fill="#39659a" />
    </>
  ),
  rotate: (
    <>
      <path d="M5.500 5a7.700 7.700 0 1 0 8.500-1" fill="none" stroke="#4a71a0" strokeWidth="2.600" />
      <path d="M1 2h9l-1 7z" fill="#2d5484" />
    </>
  ),
  scale: (
    <>
      <path d="M1 1h18v18h-8V9H1z" fill="url(#paper)" stroke="#4c78a8" />
      <path d="M1 9h10v10H1z" fill="#fff" stroke={K} strokeWidth="1.300" strokeDasharray="1.500 1.200" />
    </>
  ),
  stretch: (
    <>
      <path d="M8 1h2l9 18H8z" fill="url(#paper)" stroke="#2e6598" strokeWidth="1.500" />
      <path d="M8 1H1v18h7" fill="none" stroke={K} strokeWidth="1.500" />
      <path d="M8 1v18" stroke={K} strokeDasharray="1.500 1.200" strokeWidth="1.300" />
    </>
  ),
  trim: (
    <>
      <path d="M1 10h6" stroke="#222" strokeWidth="1.600" />
      <path d="M5 16l1 0 6-12h2" fill="none" stroke="#2e86e0" strokeWidth="1.600" />
      <path d="M11 10h9" stroke="#2e86e0" strokeWidth="1.500" strokeDasharray="2.500 1" />
    </>
  ),
  extend: (
    <>
      <path d="M0 11h7" stroke="#222" strokeWidth="1.600" />
      <path d="M8 11h6" stroke="#2e86e0" strokeWidth="1.500" strokeDasharray="2.500 1" />
      <path d="M13 17l6-13" stroke="#2e86e0" strokeWidth="1.600" />
    </>
  ),
  breakPt: <><path d="M1 4h18v13H1z" fill="url(#paper)" stroke={K} strokeWidth="1.500" /><path d="M10.500 2h4v4h-4z" fill="#3c74b4" /></>,
  breakObj: (
    <>
      <path d="M2 4h16v13H2z" fill="url(#paper)" />
      <path d="M5 4H1v13h18V4h-4" fill="none" stroke={K} strokeWidth="1.500" />
      <path d="M3 2h4v4H3zM14 2h4v4h-4z" fill="#3c74b4" />
    </>
  ),
  join: (
    <>
      <path d="M0 10h8M12 10h8" stroke="#222" strokeWidth="2" />
      <path d="M4 5l6 5-6 5zM16 5l-6 5 6 5z" fill="#2b4a70" />
    </>
  ),
  chamfer: (
    <>
      <path d="M1 1v11M1 1h11" stroke="#222" strokeDasharray="1.500 1.500" strokeWidth="1.500" />
      <path d="M1 11v9M10 1h10" stroke="#222" strokeWidth="1.500" />
      <path d="M1 11L11 1" stroke="#2e86e0" strokeWidth="1.800" />
    </>
  ),
  fillet: (
    <>
      <path d="M1 1v11M1 1h11" stroke="#222" strokeDasharray="1.500 1.500" strokeWidth="1.500" />
      <path d="M1 12v8M13 1h7" stroke="#222" strokeWidth="1.500" />
      <path d="M1.500 14C1.500 6 6 1.500 15 1.500" fill="none" stroke="#2e86e0" strokeWidth="2.200" />
    </>
  ),
  explode: (
    <>
      <path d="M1 6l3 2 1-4 2 4 4-3-1 4 4 1-4 2 1 5-4-3-4 4V13l-3-2 3-1z" fill="#f0a326" />
      <path d="M4 12l9-7 3 4-9 7z" fill="#d4281d" />
      <circle cx="4" cy="16" r="3" fill="#d4281d" />
      <path d="M2 9h3M7 5v2M8 10l3-2M10 13h3" stroke="#fff29a" strokeWidth="1.600" />
      <path d="M14 4l3-3M15 5l4-1M16 6l3 2M14 3V1" stroke="#526379" strokeWidth="1.300" strokeDasharray="1.500 1" />
    </>
  ),
  front: (
    <>
      <path d="M1 1h10v8H1zM11 12h8v7h-8z" fill="url(#paper)" stroke="#5b8fc0" strokeWidth="1.300" />
      <path d="M5 5h11v10H5z" fill="#4a79b0" stroke="#2a5488" strokeWidth="1.300" />
    </>
  ),
  back: (
    <>
      <path d="M5 5h11v10H5z" fill="#4a79b0" stroke="#2a5488" strokeWidth="1.300" />
      <path d="M1 1h9v7H1zM10 12h9v7h-9z" fill="url(#paper)" stroke="#5b8fc0" strokeWidth="1.300" />
    </>
  ),
  above: (
    <>
      <path d="M7 8h12v10H7z" fill="url(#paper)" stroke="#4a7cab" strokeWidth="1.300" />
      <path d="M2 2h13v11H2z" fill="#5585ba" stroke="#2a5488" strokeWidth="1.500" />
    </>
  ),
  under: (
    <>
      <path d="M2 2h13v10H2z" fill="#4a79b0" stroke="#2a5488" strokeWidth="1.500" />
      <path d="M7 8h12v9H7z" fill="url(#paper)" stroke="#7ba0c4" strokeWidth="1.300" />
    </>
  ),

  search: (
    <>
      <path d="M8 12l-6 5" stroke="#4f5f93" strokeWidth="3" />
      <circle cx="12" cy="8" r="5.500" fill="#dbe3f4" stroke="#6d7fae" strokeWidth="2" />
    </>
  ),
  dish: (
    <>
      <path d="M3 3c0 8 6 12 13 9z" fill="#aebbd2" stroke="#43557f" strokeWidth="1.500" />
      <path d="M9 8l6-5M12 3l4 5" fill="none" stroke="#43557f" strokeWidth="2" />
      <path d="M8 12l-4 6h13l-5-4z" fill="#43557f" />
      <circle cx="16" cy="3" r="2.300" fill="#43557f" />
    </>
  ),
  star: <path d="M10 1l2.600 6H19l-5 4.300 2 7L10 14.500 4 18.300l2-7L1 7h6.400z" fill="#3d5787" />,
  annoVis: (
    <>
      <path d="M2 18l5-11 5 11zM1 18h13" fill="#dbe8f5" stroke="#3171ad" strokeWidth="1.800" />
      <path d="M4 14l7 4M10 14l-7 4" stroke="#3171ad" strokeWidth="1.300" />
      <circle cx="14" cy="5.500" r="4.300" fill="#fdea62" stroke="#c9a820" strokeWidth=".8" />
      <path d="M12.500 10h3v3h-3z" fill="#8b8b8b" />
    </>
  ),
  annoAuto: (
    <>
      <path d="M2 18l5-9 5 9zM1 18h13" fill="#ddd" stroke="#9a9a9a" strokeWidth="1.600" />
      <path d="M18 2l-8 6 3 1-4 5 9-6-3-1z" fill="#aaa" stroke="#888" strokeWidth=".7" />
    </>
  ),
  padlock: (
    <>
      <path d="M10 9V5c0-5 8-5 8 0v4" fill="none" stroke="#51430b" strokeWidth="3.400" />
      <path d="M10 9V5c0-5 8-5 8 0v3" fill="none" stroke="#dcbc32" strokeWidth="1.500" />
      <rect x="1" y="8" width="12" height="11" rx="2" fill="#cdb01c" stroke="#4b3d00" strokeWidth="1.300" />
      <path d="M2 12h10M2 15.500h10" stroke="#6c5a06" strokeWidth="1.200" />
      <path d="M6 10v8" stroke="#fff07e" strokeWidth="2" />
    </>
  ),
  clean: (
    <>
      <path d="M1 1h18v18H1z" fill="#8fb5d9" stroke="#18406f" strokeWidth="1.800" />
      <path d="M4 4h12v12H4z" fill="url(#paper)" stroke="#4b7aa8" />
    </>
  ),
};

const Icon = ({ name, size = 20 }: { name: string; size?: number }) => (
  <svg width={size} height={size} viewBox="0 0 20 20" fill="none" aria-hidden="true">
    {art[name]}
  </svg>
);

const Chevron = ({ dir, size = 12, color = "#555", weight = 2.4 }: { dir: "up" | "down" | "left" | "right"; size?: number; color?: string; weight?: number }) => {
  const d = { up: "M1 8l5-5 5 5", down: "M1 4l5 5 5-5", left: "M8 1L3 6l5 5", right: "M4 1l5 5-5 5" }[dir];
  return (
    <svg width={size} height={size} viewBox="0 0 12 12" aria-hidden="true">
      <path d={d} fill="none" stroke={color} strokeWidth={weight} />
    </svg>
  );
};
const Triangle = ({ color, size = 8 }: { color: string; size?: number }) => (
  <svg width={size} height={size / 2} viewBox="0 0 8 4" aria-hidden="true">
    <path d="M0 0h8L4 4z" fill={color} />
  </svg>
);
const Slash = () => (
  <svg width="11" height="18" viewBox="0 0 11 18" aria-hidden="true">
    <path d="M10 0L2 17H0" fill="none" stroke="#777" />
    <path d="M6 10l3 7" fill="none" stroke="#777" />
  </svg>
);

const Tools = ({ items }: { items: string[] }) => (
  <>
    {items.map((item, i) => {
      if (item === "|") return <Separator key={i} />;
      if (item === "v")
        return (
          <DropButton key={i} aria-label="more">
            <Triangle color="#b8bcc8" size={6} />
          </DropButton>
        );
      return (
        <ToolButton key={i} aria-label={item}>
          <Icon name={item} />
        </ToolButton>
      );
    })}
  </>
);

const Dropdown = (p: { label: string; value: string; w: number; indent: number; grow?: boolean; children?: React.ReactNode }) => (
  <Combo $w={p.w} $grow={p.grow}>
    <ComboSelect aria-label={p.label} $indent={p.indent} defaultValue={p.value}>
      <option>{p.value}</option>
    </ComboSelect>
    {p.children && <ComboArt>{p.children}</ComboArt>}
    {!p.grow && (
      <ComboArrow>
        <Chevron dir="down" color="#b4b4b4" weight={1.4} />
      </ComboArrow>
    )}
  </Combo>
);

const ToolPalette = ({ tools, height }: { tools: string[]; height: number }) => (
  <Palette>
    <PaletteGrip />
    <PaletteButtons $h={height}>
      {tools.map((t) => (
        <PaletteButton key={t} aria-label={t}>
          <Icon name={t} />
        </PaletteButton>
      ))}
    </PaletteButtons>
  </Palette>
);

const menus = ["文件(F)", "编辑(E)", "视图(V)", "插入(I)", "格式(O)", "工具(T)", "绘图(D)", "标注(N)", "修改(M)", "窗口(W)"];
const standardTools = "new open save | print preview publish globe | cut copy paste brush block | undo v redo v | pan zoom zoomWin zoomPrev | props center palettes sheetset markup calc | help".split(" ");
const drawTools = "line xline pline polygon rect arc circle cloud spline ellipse ellipseArc insert block2 point hatch gradient region table mtext".split(" ");
const modifyTools = "erase copyObj mirror offset array move rotate scale stretch trim extend breakPt breakObj join chamfer fillet explode".split(" ");
const orderTools = ["front", "back", "above", "under"];
const toggles: { text: string; w: number; on?: boolean; mono?: boolean }[] = [
  { text: "捕捉", w: 35 },
  { text: "栅格", w: 35 },
  { text: "正交", w: 35 },
  { text: "极轴", w: 35, on: true },
  { text: "对象捕捉", w: 65, on: true },
  { text: "对象追踪", w: 65, on: true },
  { text: "DUCS", w: 35, on: true, mono: true },
  { text: "DYN", w: 28, on: true, mono: true },
  { text: "线宽", w: 35 },
  { text: "模型", w: 35, on: true },
];

export default function App() {
  return (
    <Window>
      <GlobalStyle />
      <HiddenDefs width="0" height="0" aria-hidden="true">
        <defs>
          <linearGradient id="paper" x1="0" y1="0" x2="1" y2="1">
            <stop offset="0" stopColor="#fff" />
            <stop offset="1" stopColor="#a8c8e4" />
          </linearGradient>
          <linearGradient id="blue" x1="0" y1="0" x2="1" y2="1">
            <stop offset="0" stopColor="#7fb0dd" />
            <stop offset="1" stopColor="#1b4d8b" />
          </linearGradient>
          <linearGradient id="olive" x1="0" y1="0" x2="1" y2="1">
            <stop offset="0" stopColor="#2d3674" />
            <stop offset="1" stopColor="#c9c23a" />
          </linearGradient>
        </defs>
      </HiddenDefs>

      <TopEdge />
      <TitleBar>
        <Icon name="app" size={18} />
        <Title>AutoCAD 2008 - [Drawing1.dwg]</Title>
        <CaptionButton aria-label="最小化">
          <svg width="12" height="12"><path d="M0 5.500h12" stroke="#8a8a8a" /></svg>
        </CaptionButton>
        <CaptionButton aria-label="最大化">
          <svg width="12" height="12"><path d="M.5 .5h11v11H.5z" fill="none" stroke="#8a8a8a" /></svg>
        </CaptionButton>
        <CaptionButton aria-label="关闭">
          <svg width="12" height="12"><path d="M0 0l12 12M12 0L0 12" stroke="#8a8a8a" /></svg>
        </CaptionButton>
      </TitleBar>

      <MenuBar>
        <Icon name="dwg" size={20} />
        <Menus>
          {menus.map((m) => (
            <MenuButton key={m}>{m}</MenuButton>
          ))}
        </Menus>
        <HelpInput aria-label="帮助" placeholder="键入问题以获取帮助" />
        <InfoButtons>
          <InfoButton $w={36} aria-label="搜索">
            <Icon name="search" size={18} />
            <Triangle color="#555" size={6} />
          </InfoButton>
          <InfoButton $w={22} aria-label="通讯中心"><Icon name="dish" size={17} /></InfoButton>
          <InfoButton $w={22} aria-label="收藏夹"><Icon name="star" size={17} /></InfoButton>
        </InfoButtons>
        <ChildButtons>
          <ChildButton aria-label="最小化图形">
            <svg width="12" height="12"><path d="M2 9h8" stroke="#9dafc2" strokeWidth="2" /></svg>
          </ChildButton>
          <ChildButton aria-label="还原图形">
            <svg width="12" height="12"><path d="M4 4V1.500h7v6H8M1 5.500h6.500v5H1zM1 6.500h7" fill="none" stroke="#9dafc2" strokeWidth="1.300" /></svg>
          </ChildButton>
          <ChildButton aria-label="关闭图形">
            <svg width="12" height="12"><path d="M2 2l8 8M10 2l-8 8" stroke="#93a6ba" strokeWidth="2.400" /></svg>
          </ChildButton>
        </ChildButtons>
      </MenuBar>

      <ToolRow>
        <ToolGroup>
          <Grip />
          <Tools items={["pdf", "pdfNote"]} />
        </ToolGroup>
        <ToolGroup>
          <Grip />
          <Tools items={standardTools} />
        </ToolGroup>
        <ToolGroup $grow>
          <Grip />
          <Tools items={["textStyle"]} />
          <Dropdown label="文字样式" value="Standard" w={149} indent={21} />
          <Separator $tight />
          <Tools items={["dimStyle"]} />
          <Dropdown label="标注样式" value="ISO-25" w={60} indent={20} grow />
        </ToolGroup>
      </ToolRow>
      <ToolRow>
        <ToolGroup>
          <Grip />
          <Dropdown label="工作空间" value="AutoCAD 经典" w={218} indent={10} />
          <Tools items={["gear", "home"]} />
        </ToolGroup>
        <ToolGroup>
          <Grip />
          <Tools items={["layers"]} />
          <Dropdown label="图层" value="0" w={374} indent={106}>
            <Icon name="bulb" /><Icon name="sun" /><Icon name="freeze" /><Icon name="unlock" /><Icon name="swatch" />
          </Dropdown>
          <Tools items={["layerState", "layerPrev", "layerWin"]} />
        </ToolGroup>
        <ToolGroup $grow>
          <Grip />
          <Dropdown label="颜色" value="ByLayer" w={188} indent={24}>
            <Icon name="swatch" />
          </Dropdown>
          <Separator $tight />
          <Dropdown label="线型" value="ByLayer" w={162} indent={85} grow>
            <svg width="78" height="20"><path d="M1 11h75" stroke="#222" strokeWidth="1.500" /></svg>
          </Dropdown>
        </ToolGroup>
      </ToolRow>

      <Main>
        <SideColumn $w={31} $gap={2}>
          <ToolPalette tools={drawTools} height={523} />
        </SideColumn>
        <Document>
          <ViewRow>
            <Canvas>
              <CrossH />
              <CrossV />
              <Ucs width="112" height="116" viewBox="0 0 112 116" fill="none" stroke="#fff">
                <path d="M4.500 2l6.500 7 6.500-7M11 9v8M3 96.500h12v12H3zM9 96V43M15 102.500h54" />
                <path d="M9 27L3.500 43h11.500zM9 27l-2 16M9 27l2.500 16M86 102.500l-17-5.500v11.500zM86 102.500l-16-2M86 102.500l-16 3" strokeWidth=".9" />
                <path d="M95 96l13 14M108 96L95 110" />
              </Ucs>
              <DynamicPrompt htmlFor="point">
                <PromptWords>指定圆的圆心或</PromptWords>
                <svg width="13" height="13" viewBox="0 0 13 13" aria-hidden="true">
                  <path d="M0 0h13v13H0z" fill="#e9edf8" />
                  <path d="M.5 .5h12v12H.5z" fill="none" stroke="#3a57c4" />
                  <path d="M6.500 2v5M3 10.500h7" stroke="#17327c" strokeWidth="1.600" />
                  <path d="M3 5.500h7L6.500 9z" fill="#17327c" />
                </svg>
              </DynamicPrompt>
              <DynamicField>
                <DynamicInput id="point" defaultValue="2P" />
                <Caret />
              </DynamicField>
            </Canvas>
            <VScroll>
              <ScrollButton aria-label="向上"><Chevron dir="up" /></ScrollButton>
              <VThumb />
              <ScrollButton aria-label="向下"><Chevron dir="down" /></ScrollButton>
            </VScroll>
          </ViewRow>
          <TabBar>
            {["M3 1v10M10 1v10L5 6z", "M9 1v10L4 6z", "M4 1v10l5-5z", "M9.500 1v10M3 1v10l5-5z"].map((d, i) => (
              <NavButton key={i} aria-label={`标签 ${i + 1}`}>
                <svg width="12" height="12" viewBox="0 0 12 12"><path d={d} fill="#6a6a6a" stroke="#6a6a6a" strokeWidth=".8" /></svg>
              </NavButton>
            ))}
            <ModelTab>模型</ModelTab>
            <LayoutTab>布局1</LayoutTab>
            <Slash />
            <LayoutTab>布局2</LayoutTab>
            <Slash />
            <HScroll>
              <Splitter />
              <ScrollButton aria-label="向左"><Chevron dir="left" /></ScrollButton>
              <HTrack $w={324} $at={138}><HThumb /></HTrack>
              <ScrollButton aria-label="向右"><Chevron dir="right" /></ScrollButton>
            </HScroll>
          </TabBar>
        </Document>
        <SideColumn $w={32}>
          <ToolPalette tools={modifyTools} height={468} />
          <ToolPalette tools={orderTools} height={110} />
        </SideColumn>
      </Main>
      <Divider />

      <CommandPanel>
        <CommandGrip />
        <CommandBody>
          <HistoryRow>
            <CommandText><Han>命令</Han>: C</CommandText>
            <HistoryScroll>
              <ScrollButton aria-label="向上"><Chevron dir="up" /></ScrollButton>
              <ScrollButton aria-label="向下"><Chevron dir="down" /></ScrollButton>
            </HistoryScroll>
          </HistoryRow>
          <PromptRow>
            <PromptLabel htmlFor="command">
              CIRCLE <Han>指定圆的圆心或</Han> [<Han>三点</Han>(3P)/<Han>两点</Han>(2P)/<Han>相切、相切、半径</Han>(T)]:
            </PromptLabel>
            <PromptInput id="command" />
            <PromptScroll>
              <ScrollButton aria-label="向左"><Chevron dir="left" /></ScrollButton>
              <HThumb />
              <HTrack $w={20} />
              <ScrollButton aria-label="向右"><Chevron dir="right" /></ScrollButton>
            </PromptScroll>
          </PromptRow>
        </CommandBody>
      </CommandPanel>

      <StatusBar>
        <Coordinates>
          <Coordinate $w={90}>336.2698,</Coordinate>
          <Coordinate $w={83}>2982.6314,</Coordinate>
          <Coordinate $w={50}>0.0000</Coordinate>
        </Coordinates>
        <Toggles>
          {toggles.map((t) => (
            <Toggle key={t.text} $w={t.w} $on={t.on} $mono={t.mono} aria-pressed={!!t.on}>
              {t.text}
            </Toggle>
          ))}
        </Toggles>
        <Scale>
          注释比例:
          <ScaleValue>1:1</ScaleValue>
          <Triangle color="#111" size={10} />
        </Scale>
        <TrayButton $w={46} aria-label="注释可见性"><Icon name="annoVis" size={18} /></TrayButton>
        <TrayButton $w={28} aria-label="自动缩放"><Icon name="annoAuto" size={18} /></TrayButton>
        <TrayButton $w={30} $sunken aria-label="锁定"><Icon name="padlock" /></TrayButton>
        <TrayButton $w={22} aria-label="菜单"><Triangle color="#111" size={10} /></TrayButton>
        <TrayButton $w={28} aria-label="全屏显示"><Icon name="clean" /></TrayButton>
        <svg width="17" height="17" viewBox="0 0 17 17" aria-hidden="true">
          <path d="M12 5h2v2h-2zM8 9h2v2H8zM12 9h2v2h-2zM4 13h2v2H4zM8 13h2v2H8zM12 13h2v2h-2z" fill="#b4b4b4" />
        </svg>
      </StatusBar>

      <Watermark width="214" height="110" viewBox="0 0 214 110" opacity=".88" fill="#fff" stroke="#c8c8c8" strokeWidth="2" paintOrder="stroke">
        <text x="2" y="69" fontFamily="Liberation Sans" fontWeight="700" fontSize="48">Bai</text>
        <ellipse cx="82" cy="29" rx="8" ry="10" />
        <ellipse cx="97" cy="14" rx="8" ry="10" />
        <ellipse cx="116" cy="15" rx="8" ry="10" />
        <ellipse cx="128" cy="34" rx="8" ry="10" />
        <path d="M105 31c9 0 12 8 18 14 14 12 6 28-7 25-8-1-13-1-21 0-14 2-21-12-10-25 6-7 10-14 20-14z" />
        <text x="88" y="62" fontFamily="Liberation Sans" fontWeight="700" fontSize="28" stroke="#bbb">du</text>
        <text x="137" y="68" fontFamily="Noto Sans CJK SC" fontWeight="700" fontSize="36">经验</text>
        <text x="2" y="97" fontFamily="Liberation Sans" fontSize="26">jingyan.baidu.com</text>
      </Watermark>

      <Annotation width="700" height="870" viewBox="0 0 700 870" fill="none" stroke="#ed1c24">
        <path d="M615.500 393.500h81v41h-81zM332.500 834.500h90v28h-90z" strokeWidth="3" />
        <path d="M380 831L639 455l-7-3 19-11-3 22-5-6L380 831" strokeWidth="2" strokeLinejoin="round" />
      </Annotation>
    </Window>
  );
}
